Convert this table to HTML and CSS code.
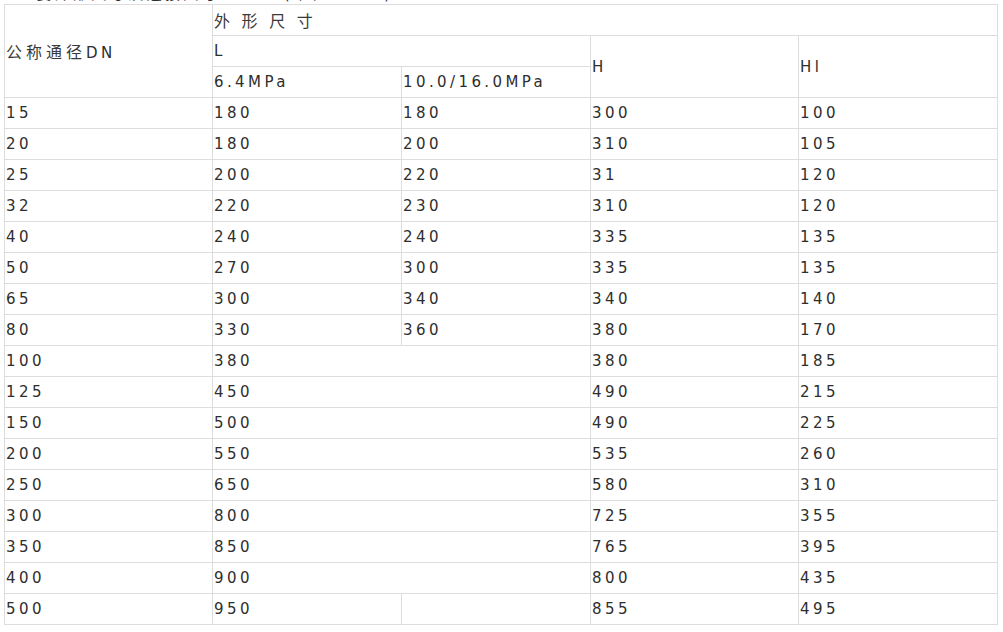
FILE: index.html
```html
<!DOCTYPE html>
<html lang="zh">
<head>
<meta charset="utf-8">
<title>外形尺寸</title>
<link rel="stylesheet" href="styles.css">
</head>
<body>
<p class="caption">主要外形尺寸及连接尺寸 　　　(单位：mm)</p>
<table class="dims">
  <colgroup>
    <col class="c1"><col class="c2"><col class="c3"><col class="c4"><col class="c5">
  </colgroup>
  <tr><td rowspan="3"><span class="cjk">公称通径</span>DN</td><td colspan="4"><span class="cjk">外 形 尺 寸</span></td></tr>
  <tr><td colspan="2">L</td><td rowspan="2">H</td><td rowspan="2">Hl</td></tr>
  <tr><td>6.4MPa</td><td>10.0/16.0MPa</td></tr>
  <tr><td>15</td><td>180</td><td>180</td><td>300</td><td>100</td></tr>
  <tr><td>20</td><td>180</td><td>200</td><td>310</td><td>105</td></tr>
  <tr><td>25</td><td>200</td><td>220</td><td>31</td><td>120</td></tr>
  <tr><td>32</td><td>220</td><td>230</td><td>310</td><td>120</td></tr>
  <tr><td>40</td><td>240</td><td>240</td><td>335</td><td>135</td></tr>
  <tr><td>50</td><td>270</td><td>300</td><td>335</td><td>135</td></tr>
  <tr><td>65</td><td>300</td><td>340</td><td>340</td><td>140</td></tr>
  <tr><td>80</td><td>330</td><td>360</td><td>380</td><td>170</td></tr>
  <tr><td>100</td><td colspan="2">380</td><td>380</td><td>185</td></tr>
  <tr><td>125</td><td colspan="2">450</td><td>490</td><td>215</td></tr>
  <tr><td>150</td><td colspan="2">500</td><td>490</td><td>225</td></tr>
  <tr><td>200</td><td colspan="2">550</td><td>535</td><td>260</td></tr>
  <tr><td>250</td><td colspan="2">650</td><td>580</td><td>310</td></tr>
  <tr><td>300</td><td colspan="2">800</td><td>725</td><td>355</td></tr>
  <tr><td>350</td><td colspan="2">850</td><td>765</td><td>395</td></tr>
  <tr><td>400</td><td colspan="2">900</td><td>800</td><td>435</td></tr>
  <tr><td>500</td><td>950</td><td></td><td>855</td><td>495</td></tr>
</table>
</body>
</html>
```
FILE: styles.css
```css
html, body {
  margin: 0;
  padding: 0;
  background: #ffffff;
}
body {
  font-family: "DejaVu Sans", "Noto Sans CJK SC", sans-serif;
  font-size: 15px;
  color: #2e2e2e;
  letter-spacing: 3.4px;
}
.caption {
  margin: -16px 0 0 18px;
  height: 20px;
  line-height: 20px;
  overflow: hidden;
}
.dims {
  margin-left: 4px;
  border-collapse: collapse;
  table-layout: fixed;
  width: 994px;
}
.c1 { width: 208px; }
.c2 { width: 189px; }
.c3 { width: 189px; }
.c4 { width: 208px; }
.c5 { width: 199px; }
.dims td {
  border: 1px solid #dddddd;
  height: 30px;
  padding: 0 1px;
  vertical-align: middle;
  white-space: nowrap;
}
.cjk {
  font-family: "Noto Sans CJK SC", sans-serif;
  font-size: 16px;
  letter-spacing: 4px;
  color: #3a3a3a;
}
```
